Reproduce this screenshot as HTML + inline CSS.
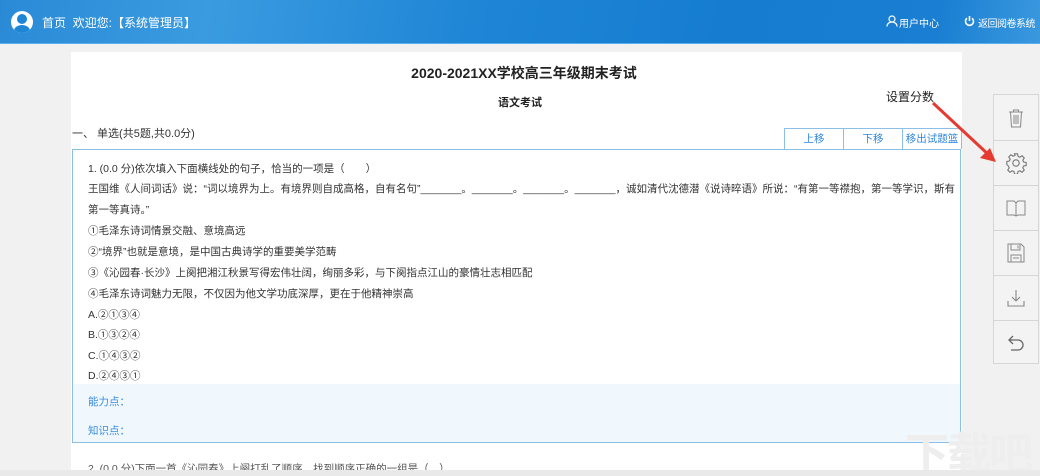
<!DOCTYPE html>
<html><head><meta charset="utf-8"><style>
*{margin:0;padding:0;box-sizing:border-box}
html,body{width:1040px;height:476px;overflow:hidden}
body{background:#f1f1f1;font-family:"Liberation Sans","Noto Sans CJK SC",sans-serif;position:relative;color:#333}
.hdr{position:absolute;left:0;top:0;width:1040px;height:44px;background:linear-gradient(100deg,#2a8ad6 0%,#3a9be0 20%,#1f86d6 45%,#157cd0 70%,#1a7fd2 90%,#3a98de 100%);border-bottom:1px solid #5ab0ea}
.hdr .t{position:absolute;color:#fff;font-size:12px;top:14px;white-space:nowrap}
.av{position:absolute;left:11px;top:11px;width:22px;height:22px;border-radius:50%;background:#fff;overflow:hidden}
.av:before{content:"";position:absolute;left:6px;top:3px;width:10px;height:10px;border-radius:50%;background:#1f86d6}
.av:after{content:"";position:absolute;left:3px;top:14px;width:16px;height:12px;border-radius:50%;background:#1f86d6}
.page{position:absolute;left:71px;top:52px;width:891px;height:424px;background:#fff}
.abs{position:absolute}
.q{position:absolute;left:72px;top:149px;width:889px;height:294px;border:1px solid #8cbfe6;background:#fff}
.q p{position:absolute;left:15px;font-size:10.5px;color:#333;white-space:nowrap}
.kp{position:absolute;left:0;top:234px;width:887px;height:58px;background:#f0f7fd}
.kp span{position:absolute;left:15px;font-size:10.5px;color:#3a8ee0}
.btns{position:absolute;left:784px;top:128px;height:21px;display:flex;border:1px solid #8cbfe6;border-bottom:none}
.btns div{height:20px;line-height:20px;font-size:10.5px;color:#2f86dd;text-align:center;border-left:1px solid #8cbfe6;white-space:nowrap}
.btns div:first-child{border-left:none}
.side{position:absolute;left:993px;top:94px;width:46px;height:270px;border:1px solid #d6d6d6;background:#f3f3f3}
.side div{height:45px;border-top:1px solid #d6d6d6;display:flex;align-items:center;justify-content:center}
.side div:first-child{border-top:none}
.bot{position:absolute;left:0;top:470px;width:1040px;height:6px;background:#e9e9e9}
</style></head><body>
<div class="hdr">
<div class="av"></div>
<div class="t" style="left:42px">首页&nbsp; 欢迎您:【系统管理员】</div>
<svg class="abs" style="left:886px;top:15px" width="12" height="12" viewBox="0 0 12 12" fill="none" stroke="#fff" stroke-width="1.2"><circle cx="6" cy="4" r="3"/><path d="M1 11.5c0-3 2.5-4.5 5-4.5s5 1.5 5 4.5"/></svg>
<div class="t" style="left:899px;font-size:10px;top:15px">用户中心</div>
<svg class="abs" style="left:964px;top:15px" width="11" height="12" viewBox="0 0 11 12" fill="none" stroke="#fff" stroke-width="1.6"><path d="M3 3.2A4 4 0 1 0 8 3.2"/><path d="M5.5 1v5"/></svg>
<div class="t" style="left:978px;font-size:10px;top:15px;letter-spacing:-0.5px">返回阅卷系统</div>
</div>
<div class="page"></div>
<div class="abs" style="left:0;top:63px;width:1040px;text-align:center;font-size:14px;font-weight:bold;color:#222;padding-left:8px">2020-2021XX学校高三年级期末考试</div>
<div class="abs" style="left:0;top:94px;width:1040px;text-align:center;font-size:11px;font-weight:bold;color:#222">语文考试</div>
<div class="abs" style="left:886px;top:88px;font-size:12px;color:#222">设置分数</div>
<div class="abs" style="left:72px;top:125px;font-size:11px;color:#333">一、 单选(共5题,共0.0分)</div>
<div class="btns"><div style="width:58px">上移</div><div style="width:59px">下移</div><div style="width:59px">移出试题篮</div></div>
<div class="q">
<p style="top:11px">1. (0.0 分)依次填入下面横线处的句子，恰当的一项是（　　）</p>
<p style="top:31px">王国维《人间词话》说：“词以境界为上。有境界则自成高格，自有名句”_______。_______。_______。_______，诚如清代沈德潜《说诗晬语》所说：“有第一等襟抱，第一等学识，斯有</p>
<p style="top:52px">第一等真诗。”</p>
<p style="top:73px">①毛泽东诗词情景交融、意境高远</p>
<p style="top:94px">②“境界”也就是意境，是中国古典诗学的重要美学范畴</p>
<p style="top:115px">③《沁园春·长沙》上阕把湘江秋景写得宏伟壮阔，绚丽多彩，与下阕指点江山的豪情壮志相匹配</p>
<p style="top:136px">④毛泽东诗词魅力无限，不仅因为他文学功底深厚，更在于他精神崇高</p>
<p style="top:157px">A.②①③④</p>
<p style="top:177px">B.①③②④</p>
<p style="top:198px">C.①④③②</p>
<p style="top:218px">D.②④③①</p>
<div class="kp"><span style="top:10px">能力点：</span><span style="top:39px">知识点：</span></div>
</div>
<div class="abs" style="left:88px;top:461px;font-size:10.5px;color:#555">2. (0.0 分)下面一首《沁园春》上阕打乱了顺序，找到顺序正确的一组是（　）</div>
<div class="side">
<div><svg width="16" height="20" viewBox="0 0 16 20" fill="none" stroke="#888" stroke-width="1"><path d="M1 4h14M5.5 4V2h5v2M2.5 4l1 15h9l1-15M6 7v9M8 7v9M10 7v9"/></svg></div>
<div><svg width="22" height="22" viewBox="0 0 24 24" fill="none" stroke="#777" stroke-width="1.2"><circle cx="12" cy="12" r="3.5"/><path d="M10.3 2h3.4l.5 2.8 2 .9 2.4-1.6 2.4 2.4-1.6 2.4.9 2 2.8.5v3.4l-2.8.5-.9 2 1.6 2.4-2.4 2.4-2.4-1.6-2 .9-.5 2.8h-3.4l-.5-2.8-2-.9-2.4 1.6-2.4-2.4 1.6-2.4-.9-2L2 13.7v-3.4l2.8-.5.9-2-1.6-2.4 2.4-2.4 2.4 1.6 2-.9z"/></svg></div>
<div><svg width="20" height="18" viewBox="0 0 20 18" fill="none" stroke="#888" stroke-width="1"><path d="M1 2h7l2 2 2-2h7v14h-7l-2 1-2-1H1zM10 4v13"/></svg></div>
<div><svg width="18" height="20" viewBox="0 0 18 20" fill="none" stroke="#888" stroke-width="1"><path d="M1 1h13l3 3v15H1zM4 1v6h9V1M11 2.5v3M4 12h10v7H4zM6 15h6"/></svg></div>
<div><svg width="20" height="20" viewBox="0 0 20 20" fill="none" stroke="#888" stroke-width="1.1"><path d="M10 2v11M6 9l4 4 4-4M2 13v5h16v-5"/></svg></div>
<div><svg width="18" height="18" viewBox="0 0 18 18" fill="none" stroke="#666" stroke-width="1.3"><path d="M6 2L2 6l4 4M2 6h9a5 5 0 0 1 0 10H4"/></svg></div>
</div>
<svg class="abs" style="left:930px;top:100px" width="70" height="70" viewBox="0 0 70 70"><path d="M3 3L60 56" stroke="#e53a2f" stroke-width="3"/><path d="M66 62L50 58 60 48z" fill="#e53a2f"/></svg>
<div class="abs" style="left:905px;top:418px;font-size:44px;color:#eeeeee;font-weight:bold;letter-spacing:-2px">下载吧</div>
<div class="bot"></div>
</body></html>
